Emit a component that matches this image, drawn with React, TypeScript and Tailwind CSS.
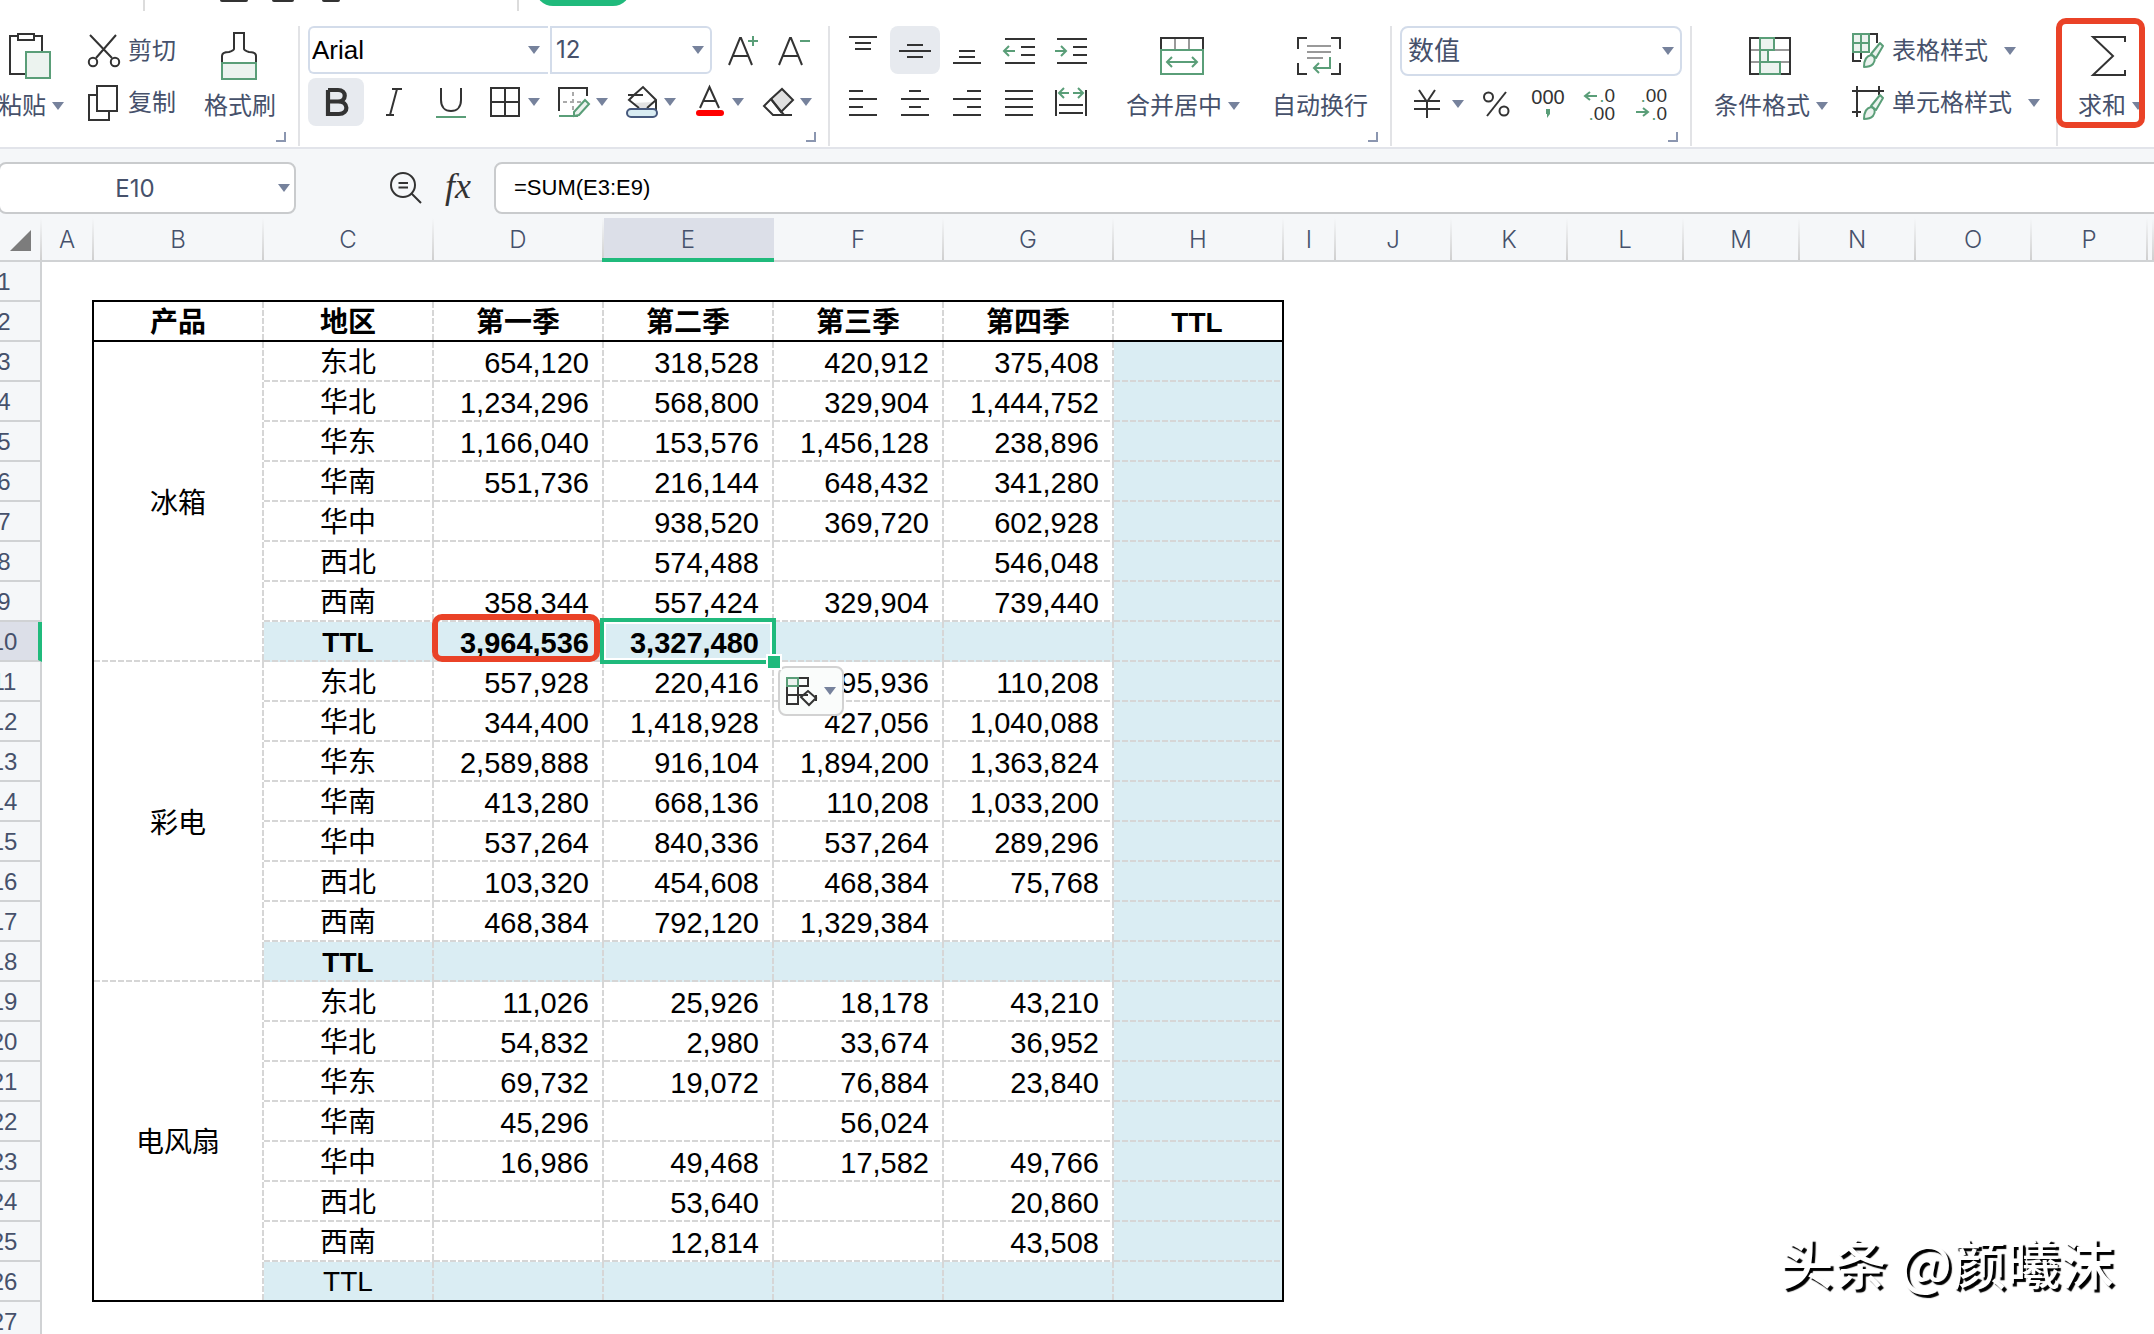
import { useState, type ReactNode } from "react";
import clsx from "clsx";

type Row = { region: string; values: (string | null)[]; total?: boolean; light?: boolean };

interface Product {
  name: string;
  rows: Row[];
}

const products: Product[] = [
  {
    name: "冰箱",
    rows: [
      { region: "东北", values: ["654,120", "318,528", "420,912", "375,408"] },
      { region: "华北", values: ["1,234,296", "568,800", "329,904", "1,444,752"] },
      { region: "华东", values: ["1,166,040", "153,576", "1,456,128", "238,896"] },
      { region: "华南", values: ["551,736", "216,144", "648,432", "341,280"] },
      { region: "华中", values: [null, "938,520", "369,720", "602,928"] },
      { region: "西北", values: [null, "574,488", null, "546,048"] },
      { region: "西南", values: ["358,344", "557,424", "329,904", "739,440"] },
      { region: "TTL", values: ["3,964,536", "3,327,480", null, null], total: true },
    ],
  },
  {
    name: "彩电",
    rows: [
      { region: "东北", values: ["557,928", "220,416", "495,936", "110,208"] },
      { region: "华北", values: ["344,400", "1,418,928", "427,056", "1,040,088"] },
      { region: "华东", values: ["2,589,888", "916,104", "1,894,200", "1,363,824"] },
      { region: "华南", values: ["413,280", "668,136", "110,208", "1,033,200"] },
      { region: "华中", values: ["537,264", "840,336", "537,264", "289,296"] },
      { region: "西北", values: ["103,320", "454,608", "468,384", "75,768"] },
      { region: "西南", values: ["468,384", "792,120", "1,329,384", null] },
      { region: "TTL", values: [null, null, null, null], total: true },
    ],
  },
  {
    name: "电风扇",
    rows: [
      { region: "东北", values: ["11,026", "25,926", "18,178", "43,210"] },
      { region: "华北", values: ["54,832", "2,980", "33,674", "36,952"] },
      { region: "华东", values: ["69,732", "19,072", "76,884", "23,840"] },
      { region: "华南", values: ["45,296", null, "56,024", null] },
      { region: "华中", values: ["16,986", "49,468", "17,582", "49,766"] },
      { region: "西北", values: [null, "53,640", null, "20,860"] },
      { region: "西南", values: [null, "12,814", null, "43,508"] },
      { region: "TTL", values: [null, null, null, null], total: true, light: true },
    ],
  },
];

const headings = ["产品", "地区", "第一季", "第二季", "第三季", "第四季", "TTL"];
const letters = ["A", "B", "C", "D", "E", "F", "G", "H", "I", "J", "K", "L", "M", "N", "O", "P", ""];

// dashed bottom + right edge of a cell
const DASH =
  "bg-no-repeat bg-[repeating-linear-gradient(90deg,#d6d6d6_0_6px,transparent_6px_8px),repeating-linear-gradient(180deg,#d6d6d6_0_6px,transparent_6px_8px)] [background-size:100%_2px,2px_100%] [background-position:0_100%,100%_0]";
const DASH_RIGHT =
  "bg-no-repeat bg-[repeating-linear-gradient(180deg,#d6d6d6_0_6px,transparent_6px_8px)] [background-size:2px_100%] [background-position:100%_0]";
const DASH_BOTTOM =
  "bg-no-repeat bg-[repeating-linear-gradient(90deg,#d6d6d6_0_6px,transparent_6px_8px)] [background-size:100%_2px] [background-position:0_100%]";

const INK = "#333333";
const GREEN = "#5a9e78";
const PALE = "#ecf3ef";

function Icon({ w = 32, h = 32, children }: { w?: number; h?: number; children: ReactNode }) {
  return (
    <svg
      width={w}
      height={h}
      viewBox={`0 0 ${w} ${h}`}
      fill="none"
      stroke={INK}
      strokeWidth="2"
      className="shrink-0 overflow-visible"
      aria-hidden="true"
    >
      {children}
    </svg>
  );
}

function Caret() {
  return (
    <svg width="12" height="8" viewBox="0 0 12 8" className="shrink-0" aria-hidden="true">
      <path d="M0 0H12L6 8Z" fill="#76829c" />
    </svg>
  );
}

function Corner() {
  return <span className="absolute right-3 bottom-1 size-2.5 border-r-2 border-b-2 border-[#8b96b0]" />;
}

function Group({ className, children }: { className?: string; children: ReactNode }) {
  return <div className={clsx("relative flex h-30 shrink-0 border-r-2 border-[#e2e3e6]", className)}>{children}</div>;
}

function BigButton({ label, caret, children }: { label: string; caret?: boolean; children: ReactNode }) {
  return (
    <button type="button" className="flex h-24 shrink-0 flex-col items-center pt-1.5">
      <span className="flex h-12 items-center pr-0.5">{children}</span>
      <span className="mt-3 flex items-center gap-1.5 leading-7 whitespace-nowrap">
        {label}
        {caret && <Caret />}
      </span>
    </button>
  );
}

function SmallButton({ label, caret, children }: { label: string; caret?: boolean; children: ReactNode }) {
  return (
    <button type="button" className="flex h-12 items-center gap-2 pt-0.5 whitespace-nowrap">
      {children}
      {label}
      {caret && (
        <span className="ml-2">
          <Caret />
        </span>
      )}
    </button>
  );
}

function IconButton({ label, active, className, children }: { label: string; active?: boolean; className?: string; children: ReactNode }) {
  return (
    <button
      type="button"
      aria-label={label}
      className={clsx("flex h-12 items-center justify-center rounded-lg", active && "bg-[#e7eaef]", className)}
    >
      {children}
    </button>
  );
}

function SplitButton({ label, children }: { label: string; children: ReactNode }) {
  return (
    <button type="button" aria-label={label} className="flex h-12 items-center gap-1.5">
      {children}
      <Caret />
    </button>
  );
}

function Dropdown({ label, value, className, selectClass }: { label: string; value: string; className: string; selectClass: string }) {
  return (
    <div className={clsx("relative", className)}>
      <select
        aria-label={label}
        defaultValue={value}
        className={clsx("size-full appearance-none border-2 border-[#d3dcea] bg-white outline-none", selectClass)}
      >
        <option>{value}</option>
      </select>
      <span className="pointer-events-none absolute inset-y-0 right-2 flex items-center">
        <Caret />
      </span>
    </div>
  );
}

// horizontal strokes given as [x1, x2, y]
function Lines({ rows }: { rows: [number, number, number][] }) {
  return (
    <>
      {rows.map(([x1, x2, y]) => (
        <path key={y} d={`M${x1} ${y}H${x2}`} />
      ))}
    </>
  );
}

function Brush() {
  return (
    <g stroke={GREEN} fill={PALE} strokeLinejoin="round">
      <path d="M19 21L28 10L31 13L24 25Z" />
      <path d="M12 34C12 28 14 23 19 22C23 23 24 27 21 31C19 33 16 34 12 34Z" />
    </g>
  );
}

function Decimals({ y, zeros }: { y: number; zeros: string }) {
  return (
    <text x="31" y={y} textAnchor="end" fontSize="19" fontFamily="Liberation Sans" fill={INK} stroke="none">
      <tspan fill={GREEN}>.</tspan>
      {zeros}
    </text>
  );
}

function TopStrip() {
  return (
    <div className="flex h-[26px] items-start overflow-hidden">
      <span className="ml-[143px] h-[11px] w-0.5 bg-[#dcdcdc]" />
      <span className="ml-[75px] h-0.5 w-7 rounded-b-sm bg-[#333]" />
      <span className="ml-6 h-0.5 w-[22px] rounded-b-sm bg-[#333]" />
      <span className="ml-7 h-0.5 w-[18px] rounded-b-sm bg-[#333]" />
      <span className="ml-[177px] h-[11px] w-0.5 bg-[#dcdcdc]" />
      <span className="-mt-[34px] ml-4 h-10 w-24 rounded-[18px] bg-[#20ba7c]" />
    </div>
  );
}

function Ribbon() {
  return (
    <header className="overflow-hidden border-b-2 border-[#e2e4ea] bg-white pb-px">
      <TopStrip />
      <div className="flex text-2xl text-[#46516b]">
        <Group className="-ml-0.5 pr-[22px]">
          <BigButton label="粘贴" caret>
            <Icon w={42} h={46}>
              <path d="M9 3H1V41H17M25 3H33V18" />
              <path d="M9 1H25V7H9Z" />
              <path d="M17 19H41V45H17Z" fill={PALE} stroke={GREEN} />
            </Icon>
          </BigButton>
          <div className="ml-6 flex flex-col gap-1">
            <SmallButton label="剪切">
              <Icon h={36}>
                <path d="M2 2L24 25M28 2L8 25" />
                <circle cx="5" cy="29" r="4.2" />
                <circle cx="27" cy="29" r="4.2" />
              </Icon>
            </SmallButton>
            <SmallButton label="复制">
              <Icon h={36}>
                <path d="M9 1H29V26H9Z" />
                <path d="M9 10H1V35H21V26" />
              </Icon>
            </SmallButton>
          </div>
          <div className="ml-7">
            <BigButton label="格式刷">
              <Icon w={36} h={48}>
                <path d="M1 31V24C1 21 5 20 8 20C11 19 13 18 13 17V1H23V17C23 18 25 19 28 20C31 20 35 21 35 24V31" />
                <path d="M1 31H35V47H1Z" fill={PALE} stroke={GREEN} />
              </Icon>
            </BigButton>
          </div>
          <Corner />
        </Group>

        <Group className="flex-col gap-1 pr-4 pl-2">
          <div className="flex items-center">
            <Dropdown label="字体" value="Arial" className="h-12 w-60" selectClass="rounded-l-md border-r-0 pl-0.5 text-[26px] text-black font-[Liberation_Sans]" />
            <Dropdown label="字号" value="12" className="ml-0.5 h-12 w-[162px]" selectClass="rounded-r-md pl-1" />
            <IconButton label="增大字号" className="ml-4">
              <Icon>
                <path d="M1 31L12 4H13L24 31M5 22H20" />
                <path d="M20 7H30M25 2V12" stroke={GREEN} />
              </Icon>
            </IconButton>
            <IconButton label="减小字号" className="ml-4.5">
              <Icon>
                <path d="M1 31L12 4H13L24 31M5 22H20" />
                <path d="M22 7H32" stroke={GREEN} />
              </Icon>
            </IconButton>
          </div>
          <div className="flex items-center">
            <div className="flex gap-0.5">
              <IconButton label="加粗" active className="w-14">
                <Icon>
                  <path d="M8 4H18C27 4 27 15.500 18 15.500H8M18 15.500C29 15.500 29 28 19 28H8V4" strokeWidth="4.200" />
                </Icon>
              </IconButton>
              <IconButton label="倾斜" className="w-14">
                <Icon>
                  <path d="M14 3H24M8 29H16M19 3L12 29" />
                </Icon>
              </IconButton>
              <IconButton label="下划线" className="w-14">
                <Icon>
                  <path d="M5 2V14C5 21 9 25 15 25S25 21 25 14V2" />
                  <path d="M0 31H30" stroke={GREEN} />
                </Icon>
              </IconButton>
            </div>
            <div className="ml-2.5 flex gap-4.5">
              <SplitButton label="边框">
                <Icon>
                  <path d="M1 2H29V30H1ZM15 2V30M1 16H29" />
                </Icon>
              </SplitButton>
              <SplitButton label="绘制边框">
                <Icon>
                  <path d="M1 25V2H29V10" />
                  <path d="M15 6V26M5 16H25" stroke="#aaa" strokeDasharray="4 3" />
                  <path d="M1 30H20" stroke={GREEN} />
                  <path d="M16 30V26L27 14L31 18L21 29Z" stroke={GREEN} fill={PALE} />
                </Icon>
              </SplitButton>
              <SplitButton label="填充颜色">
                <Icon>
                  <path d="M6 17L17 25L28 16Z" fill="#e2e2e2" stroke="none" />
                  <path d="M8 9L17 1L30 14V25M8 9L3 14L13 22M30 14L21 22M2 9H17" />
                  <rect x="1" y="23" width="30" height="8" rx="4" fill="#d9ecf2" stroke="#46587c" />
                </Icon>
              </SplitButton>
              <SplitButton label="字体颜色">
                <Icon>
                  <path d="M6 22L15.500 1L25 22M9 15H22" />
                  <rect x="2" y="24" width="28" height="6" rx="3" fill="#f00" stroke="none" />
                </Icon>
              </SplitButton>
              <SplitButton label="清除">
                <Icon>
                  <path d="M9 13L20 3L31 14L19 26Z" fill="#e0e0e0" />
                  <path d="M9 13L2 20L11 29H30M9 13L22 29" />
                </Icon>
              </SplitButton>
            </div>
          </div>
          <Corner />
        </Group>

        <Group className="pr-[22px] pl-2">
          <div className="grid grid-cols-5 gap-x-0.5 gap-y-1 self-start">
            <IconButton label="顶端对齐" className="w-[50px]">
              <Icon>
                <Lines rows={[[2, 30, 3], [8, 24, 9], [8, 24, 15]]} />
              </Icon>
            </IconButton>
            <IconButton label="垂直居中" active className="w-[50px]">
              <Icon>
                <Lines rows={[[8, 24, 11], [0, 32, 17], [8, 24, 23]]} />
              </Icon>
            </IconButton>
            <IconButton label="底端对齐" className="w-[50px]">
              <Icon>
                <Lines rows={[[8, 24, 17], [8, 24, 23], [2, 30, 29]]} />
              </Icon>
            </IconButton>
            <IconButton label="减少缩进" className="w-[50px]">
              <Icon>
                <Lines rows={[[2, 32, 5], [18, 32, 13], [18, 32, 21], [2, 32, 29]]} />
                <path d="M12 17H1M6 12L1 17L6 22" stroke={GREEN} />
              </Icon>
            </IconButton>
            <IconButton label="增加缩进" className="w-[50px]">
              <Icon>
                <Lines rows={[[2, 32, 5], [18, 32, 13], [18, 32, 21], [2, 32, 29]]} />
                <path d="M0 17H11M6 12L11 17L6 22" stroke={GREEN} />
              </Icon>
            </IconButton>
            <IconButton label="左对齐" className="w-[50px]">
              <Icon>
                <Lines rows={[[2, 16, 5], [2, 30, 13], [2, 16, 21], [2, 30, 29]]} />
              </Icon>
            </IconButton>
            <IconButton label="水平居中" className="w-[50px]">
              <Icon>
                <Lines rows={[[10, 22, 5], [2, 30, 13], [10, 22, 21], [2, 30, 29]]} />
              </Icon>
            </IconButton>
            <IconButton label="右对齐" className="w-[50px]">
              <Icon>
                <Lines rows={[[16, 30, 5], [2, 30, 13], [16, 30, 21], [2, 30, 29]]} />
              </Icon>
            </IconButton>
            <IconButton label="两端对齐" className="w-[50px]">
              <Icon>
                <Lines rows={[[2, 30, 5], [2, 30, 13], [2, 30, 21], [2, 30, 29]]} />
              </Icon>
            </IconButton>
            <IconButton label="分散对齐" className="w-[50px]">
              <Icon>
                <path d="M1 4V30M31 4V30M4 19H28M4 27H28" />
                <path d="M14 7H4M9 2L4 7L9 12M18 7H28M23 2L28 7L23 12" stroke={GREEN} />
              </Icon>
            </IconButton>
          </div>
          <div className="ml-[30px] flex gap-8">
            <BigButton label="合并居中" caret>
              <Icon w={44} h={38}>
                <path d="M15 1V12M29 1V12" stroke="#999" />
                <path d="M1 13V1H43V13" />
                <path d="M1 13H43V37H1Z" stroke={GREEN} />
                <path d="M7 25H37M12 20L7 25L12 30M32 20L37 25L32 30" stroke={GREEN} />
              </Icon>
            </BigButton>
            <BigButton label="自动换行">
              <Icon w={44} h={38}>
                <path d="M10 1H1V12M34 1H43V12M1 26V37H10M43 26V37H34" />
                <path d="M10 9H34M10 15H34M10 21H26" stroke="#999" />
                <path d="M33 20V31H17M22 26L17 31L22 36" stroke={GREEN} />
              </Icon>
            </BigButton>
          </div>
          <Corner />
        </Group>

        <Group className="flex-col gap-1 px-2">
          <Dropdown label="数字格式" value="数值" className="h-[50px] w-[282px]" selectClass="rounded-lg pl-1.5 text-[26px]" />
          <div className="flex items-center gap-5 pl-3">
            <button type="button" aria-label="货币" className="-mr-1 flex h-12 items-center gap-2">
              <Icon>
                <path d="M7 2L15 14L23 2M2 13H28M2 21H28M15 14V30" />
              </Icon>
              <Caret />
            </button>
            <IconButton label="百分比">
              <Icon>
                <circle cx="8.500" cy="9" r="4.500" />
                <circle cx="24" cy="23" r="4.500" />
                <path d="M26 4L7 28" />
              </Icon>
            </IconButton>
            <IconButton label="千位分隔">
              <Icon>
                <text x="16" y="16" textAnchor="middle" fontSize="20" fontFamily="Liberation Sans" fill={INK} stroke="none">
                  000
                </text>
                <path d="M14 21H18V26L15 30V26H14Z" fill={GREEN} stroke="none" />
              </Icon>
            </IconButton>
            <IconButton label="增加小数位">
              <Icon>
                <path d="M13 8H1M6 4L1 8L6 12" stroke={GREEN} />
                <Decimals y={14} zeros="0" />
                <Decimals y={32} zeros="00" />
              </Icon>
            </IconButton>
            <IconButton label="减少小数位">
              <Icon>
                <path d="M0 24H12M7 20L12 24L7 28" stroke={GREEN} />
                <Decimals y={14} zeros="00" />
                <Decimals y={32} zeros="0" />
              </Icon>
            </IconButton>
          </div>
          <Corner />
        </Group>

        <Group className="gap-6 pr-4 pl-[22px]">
          <BigButton label="条件格式" caret>
            <Icon w={42} h={38}>
              <path d="M1 13H41M1 25H41" stroke="#999" />
              <path d="M1 1H41V37H1Z" />
              <path d="M11 1H25V13H11ZM11 13H19V25H11ZM11 25H31V37H11Z" fill={PALE} stroke={GREEN} />
            </Icon>
          </BigButton>
          <div className="flex flex-col items-start gap-1">
            <SmallButton label="表格样式" caret>
              <Icon h={36}>
                <path d="M10 1H25V10M1 18V28H9M9 20V26" />
                <path d="M1 1H17V19H1ZM9 1V19M1 10H17" fill={PALE} stroke={GREEN} />
                <Brush />
              </Icon>
            </SmallButton>
            <SmallButton label="单元格样式" caret>
              <Icon h={36}>
                <path d="M0 6H32M5 1V32M27 1V10M0 27H9" />
                <Brush />
              </Icon>
            </SmallButton>
          </div>
        </Group>

        <div className="relative flex shrink-0 pl-5">
          <BigButton label="求和" caret>
            <Icon w={36} h={40}>
              <path d="M33 6V1H1L21 20L1 39H33V34" />
            </Icon>
          </BigButton>
          <span className="absolute -top-2 -left-0.5 h-[110px] w-[89px] rounded-[10px] border-6 border-[#ea4227]" />
        </div>
      </div>
    </header>
  );
}

function FormulaBar() {
  const [formula, setFormula] = useState("=SUM(E3:E9)");

  return (
    <div className="flex items-center gap-5 overflow-hidden bg-[#f5f7f9] pt-[13px] pb-1">
      <div className="relative mr-[74px] -ml-0.5 h-13 w-[298px] shrink-0">
        <input
          aria-label="名称框"
          defaultValue="E10"
          className="size-full rounded-lg border-2 border-[#c9cbcd] bg-white pr-6 text-center text-2xl text-[#46516b] outline-none"
        />
        <span className="pointer-events-none absolute inset-y-0 right-1.5 flex items-center">
          <Caret />
        </span>
      </div>
      <button type="button" aria-label="查找公式">
        <Icon>
          <circle cx="13" cy="13" r="12" />
          <path d="M8.500 11H18M8.500 15.500H18M21.500 21.500L31 31" />
        </Icon>
      </button>
      <button type="button" aria-label="插入函数" className="w-8 pb-1 text-center font-[Liberation_Serif] text-4xl leading-8 text-[#333] italic">
        fx
      </button>
      <input
        aria-label="编辑栏"
        value={formula}
        onChange={(e) => setFormula(e.target.value)}
        className="-mr-3 h-13 min-w-0 flex-1 rounded-lg border-2 border-[#c9cbcd] bg-white pl-[18px] font-[Liberation_Sans] text-[22px] text-black outline-none"
      />
    </div>
  );
}

function RowHead({ n }: { n: number }) {
  const active = n === 10;
  return (
    <th
      scope="row"
      className={clsx(
        "h-10 overflow-hidden border-b-2 border-b-[#d0d2d4] p-0 pt-0.5 text-2xl font-light text-[#46516b]",
        active ? "border-r-4 border-r-[#20ba7c] bg-[#dcdfe8]" : "border-r-2 border-r-[#d0d2d4] bg-[#f5f7f9]",
      )}
    >
      <div className="-ml-[30px] w-[68px] text-center leading-8">{n}</div>
    </th>
  );
}

function Selection() {
  return (
    <>
      <span className="absolute -top-1 -right-0.5 -bottom-0.5 -left-1 z-10 border-4 border-[#20ba7c] inset-ring-2 inset-ring-white" />
      <span className="absolute -right-2 -bottom-2 z-20 size-4 border-2 border-white bg-[#20ba7c]" />
      <button
        type="button"
        aria-label="粘贴选项"
        className="absolute top-11 left-[174px] z-10 flex h-[50px] w-[66px] items-center justify-center gap-1.5 rounded-lg border-2 border-[#d2d2d2] bg-[#fafcfb]"
      >
        <Icon h={28}>
          <path d="M1 1H22V9H12M1 9V27H12V1M1 18H12" />
          <path d="M1 1H12V9H1Z" fill={PALE} stroke={GREEN} />
          <path d="M15 20L22 14L30 21L23 28ZM13 18H22M30 18V24" />
        </Icon>
        <Caret />
      </button>
    </>
  );
}

function Sheet() {
  return (
    <table className="w-full table-fixed border-separate border-spacing-0 bg-white">
      <colgroup>
        <col className="w-[42px]" />
        <col className="w-13" />
        {headings.map((h, i) => (
          <col key={h + i} className="w-[170px]" />
        ))}
        <col className="w-13" />
        {letters.slice(9, 16).map((l) => (
          <col key={l} className="w-[116px]" />
        ))}
        <col />
      </colgroup>
      <thead>
        <tr className="h-11 bg-[#f5f7f9] text-2xl text-[#46516b]">
          <th className="border-b-2 border-[#d0d2d4] bg-[linear-gradient(to_bottom,transparent,#cfcfcf)] bg-[length:2px_100%] bg-right bg-no-repeat p-0">
            <svg width="42" height="42" viewBox="0 0 42 42" aria-hidden="true">
              <path d="M31 12V33H10Z" fill="#7c7c7c" />
            </svg>
          </th>
          {letters.map((l, i) => (
            <th
              key={i}
              scope="col"
              className={clsx(
                "relative border-b-2 border-[#d0d2d4] p-0 pt-0.5 pr-0.5 font-light",
                l === "E"
                  ? "bg-[#dcdfe8]"
                  : "bg-[linear-gradient(to_bottom,transparent,#cfcfcf)] bg-[length:2px_100%] bg-right bg-no-repeat",
              )}
            >
              {l}
              {l === "E" && <span className="absolute right-0 -bottom-0.5 -left-0.5 h-1 bg-[#20ba7c]" />}
            </th>
          ))}
        </tr>
      </thead>
      <tbody className="font-[Liberation_Sans,Noto_Sans_CJK_SC,sans-serif] text-[28px] leading-8 text-black">
        <tr>
          <RowHead n={1} />
          <td className="bg-[linear-gradient(#000,#000)] bg-[length:2px_2px] bg-right-bottom bg-no-repeat p-0" />
          <td colSpan={7} className="border-b-2 border-black p-0" />
          <td colSpan={9} className="p-0" />
        </tr>
        <tr>
          <RowHead n={2} />
          <td className="border-r-2 border-black p-0" />
          {headings.map((h, i) => (
            <td
              key={i}
              className={clsx("border-b-2 border-black p-0 pt-1 pr-0.5 text-center font-bold", i === 6 ? "border-r-2" : DASH_RIGHT)}
            >
              {h}
            </td>
          ))}
          <td colSpan={9} className="p-0" />
        </tr>
        {products.map((product, p) =>
          product.rows.map((row, r) => {
            const n = 3 + p * 8 + r;
            const last = n === 26;
            const edge = last ? clsx("border-b-2 border-black", DASH_RIGHT) : DASH;
            return (
              <tr key={n}>
                <RowHead n={n} />
                <td className="border-r-2 border-black p-0" />
                {r === 0 && (
                  <td rowSpan={8} className={clsx("p-0 pt-1 pr-0.5 text-center", p === 2 ? clsx("border-b-2 border-black", DASH_RIGHT) : DASH)}>
                    {product.name}
                  </td>
                )}
                <td className={clsx("p-0 pt-0.5 pr-0.5 text-center", edge, row.total && "bg-[#daedf3]", row.total && !row.light && "font-bold")}>
                  {row.region}
                </td>
                {row.values.map((value, c) => (
                  <td
                    key={c}
                    className={clsx("relative p-0 pt-0.5 pr-[15px] text-right text-[29px]", edge, row.total && "bg-[#daedf3] font-bold")}
                  >
                    {value}
                    {n === 10 && c === 0 && (
                      <span className="absolute -top-2 right-1 bottom-0 -left-0.5 z-20 rounded-[10px] border-6 border-[#ea4227]" />
                    )}
                    {n === 10 && c === 1 && <Selection />}
                  </td>
                ))}
                <td className={clsx("border-r-2 border-black bg-[#daedf3] p-0", last ? "border-b-2" : DASH_BOTTOM)} />
                <td colSpan={9} className="p-0" />
              </tr>
            );
          }),
        )}
        <tr>
          <RowHead n={27} />
          <td colSpan={17} className="p-0" />
        </tr>
      </tbody>
    </table>
  );
}

export default function App() {
  return (
    <div className="relative h-screen overflow-hidden bg-white font-[Inter,Noto_Sans_CJK_SC,sans-serif]">
      <Ribbon />
      <FormulaBar />
      <Sheet />
      <p className="absolute right-10 bottom-8 font-[Noto_Sans_CJK_SC,sans-serif] text-[54px] font-medium text-white [text-shadow:3px_3px_1px_#000]">
        头条 @颜曦沫
      </p>
    </div>
  );
}
